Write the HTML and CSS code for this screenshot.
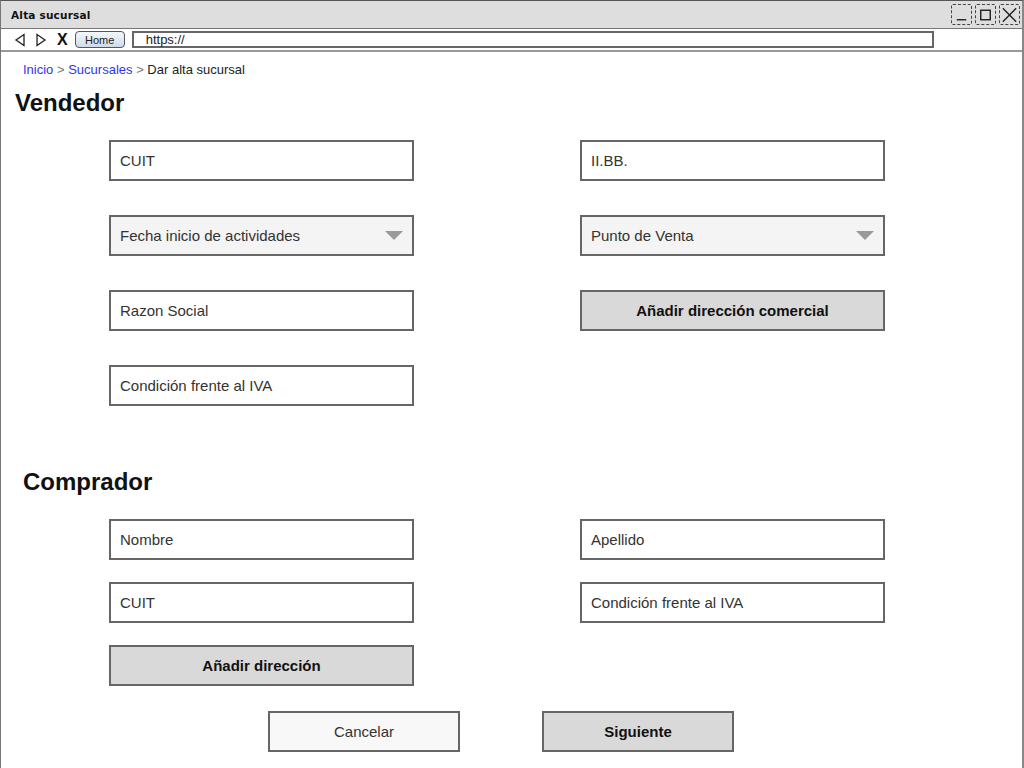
FILE: index.html
```html
<!DOCTYPE html>
<html lang="es">
<head>
<meta charset="utf-8">
<title>Alta sucursal</title>
<link rel="stylesheet" href="styles.css">
</head>
<body>
<div class="window">
  <header class="titlebar">
    <span class="title">Alta sucursal</span>
    <div class="winctrls">
      <span class="wbtn"><svg width="20" height="20" viewBox="0 0 20 20"><path d="M5 15h10" stroke="#222" stroke-width="1.5"/></svg></span>
      <span class="wbtn"><svg width="20" height="20" viewBox="0 0 20 20"><rect x="5" y="5" width="10" height="10" fill="none" stroke="#222" stroke-width="1.5"/></svg></span>
      <span class="wbtn"><svg width="20" height="20" viewBox="0 0 20 20"><path d="M3 3L17 17M17 3L3 17" stroke="#222" stroke-width="1.5"/></svg></span>
    </div>
  </header>
  <nav class="toolbar">
    <svg class="navic" width="12" height="14" viewBox="0 0 12 14"><path d="M10 1.5L2 7l8 5.5z" fill="none" stroke="#222" stroke-width="1.3"/></svg>
    <svg class="navic" width="12" height="14" viewBox="0 0 12 14"><path d="M2 1.5L10 7l-8 5.5z" fill="none" stroke="#222" stroke-width="1.3"/></svg>
    <span class="xbtn">X</span>
    <span class="home">Home</span>
    <div class="url">https://</div>
  </nav>
  <main class="content">
    <div class="crumbs"><a class="lnk">Inicio</a> <span class="sep">&gt;</span> <a class="lnk">Sucursales</a> <span class="sep">&gt;</span> Dar alta sucursal</div>
    <h2 class="h-vend">Vendedor</h2>
    <div class="grid grid-vend">
      <div class="field">CUIT</div>
      <div class="field">II.BB.</div>
      <div class="field select">Fecha inicio de actividades<span class="caret"></span></div>
      <div class="field select">Punto de Venta<span class="caret"></span></div>
      <div class="field">Razon Social</div>
      <div class="btn">Añadir dirección comercial</div>
      <div class="field">Condición frente al IVA</div>
    </div>
    <h2 class="h-comp">Comprador</h2>
    <div class="grid grid-comp">
      <div class="field">Nombre</div>
      <div class="field">Apellido</div>
      <div class="field">CUIT</div>
      <div class="field">Condición frente al IVA</div>
      <div class="btn">Añadir dirección</div>
    </div>
    <div class="actions">
      <div class="btn light">Cancelar</div>
      <div class="btn">Siguiente</div>
    </div>
  </main>
</div>
</body>
</html>
```
FILE: styles.css
```css
* { box-sizing: border-box; }
html, body { margin: 0; padding: 0; }
body {
  font-family: "Liberation Sans", Arial, sans-serif;
  color: #222;
  background: #fff;
}
.window {
  width: 1024px;
  height: 768px;
  border-top: 1px solid #555;
  border-left: 1px solid #777;
  border-right: 2px solid #888;
  overflow: hidden;
}
.titlebar {
  height: 28px;
  background: #dedede;
  border-bottom: 1px solid #777;
  display: flex;
  align-items: center;
  justify-content: space-between;
  padding-left: 10px;
  padding-right: 2px;
}
.title {
  font-family: "DejaVu Sans", sans-serif;
  font-weight: bold;
  font-size: 10.5px;
  color: #111;
  letter-spacing: 0.2px;
}
.winctrls { display: flex; gap: 3px; }
.wbtn {
  width: 21px;
  height: 21px;
  border: 1px dashed #444;
  border-radius: 2px;
  display: flex;
  align-items: center;
  justify-content: center;
}
.toolbar {
  height: 23px;
  border-bottom: 2px solid #999;
  display: flex;
  align-items: center;
  padding-left: 13px;
}
.navic { margin-right: 9px; }
.xbtn {
  font-weight: bold;
  font-size: 16px;
  color: #111;
  margin-left: 1px;
  margin-right: 7px;
}
.home {
  width: 50px;
  height: 17px;
  border: 1px solid #556;
  border-radius: 4px;
  background: linear-gradient(#f4f8fc, #cfdbe8);
  font-size: 11px;
  display: flex;
  align-items: center;
  justify-content: center;
  color: #222;
  margin-right: 7px;
}
.url {
  width: 802px;
  height: 17px;
  border: 2px solid #666;
  font-size: 13px;
  line-height: 13px;
  padding-left: 12px;
  color: #222;
}
.crumbs {
  font-size: 13px;
  margin: 10px 0 0 22px;
  line-height: 15px;
  color: #222;
}
.lnk { color: #3333ee; }
.sep { color: #777; }
h2 {
  margin: 0;
  font-size: 24px;
  font-weight: bold;
  color: #111;
  line-height: 28px;
}
.h-vend { margin: 12px 0 0 14px; }
.grid {
  display: grid;
  grid-template-columns: 305px 305px;
  column-gap: 166px;
  margin-left: 108px;
}
.grid-vend { margin-top: 23px; row-gap: 34px; }
.h-comp { margin: 62px 0 0 22px; }
.grid-comp { margin-top: 23px; row-gap: 22px; }
.field, .btn {
  height: 41px;
  border: 2px solid #666;
  font-size: 15px;
  display: flex;
  align-items: center;
}
.field {
  padding-left: 9px;
  background: #fff;
  color: #333;
}
.field.select {
  background: #f4f4f4;
  justify-content: space-between;
  padding-right: 9px;
}
.caret {
  width: 0;
  height: 0;
  border-left: 9px solid transparent;
  border-right: 9px solid transparent;
  border-top: 9px solid #999;
}
.btn {
  background: #d9d9d9;
  font-weight: bold;
  justify-content: center;
  color: #111;
}
.btn.light {
  background: #f8f8f8;
  font-weight: normal;
  color: #333;
}
.actions {
  display: flex;
  gap: 82px;
  margin: 25px 0 0 267px;
}
.actions .btn { width: 192px; }
```
